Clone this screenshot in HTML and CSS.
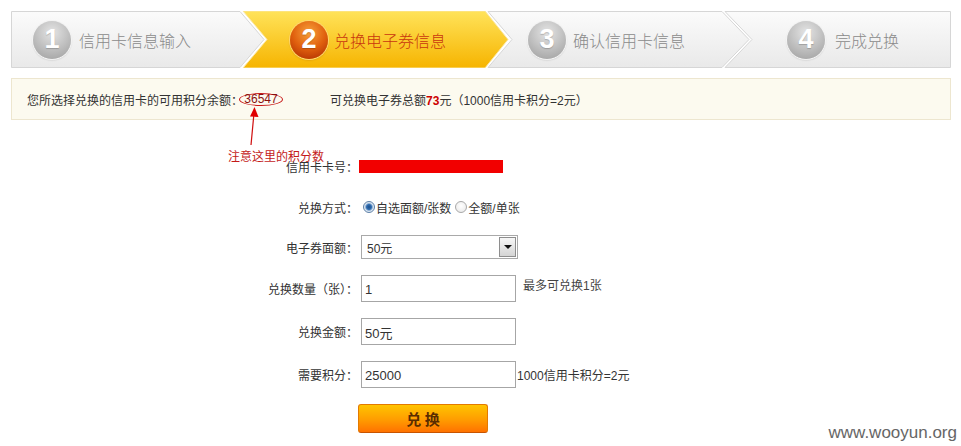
FILE: index.html
```html
<!DOCTYPE html>
<html lang="zh-CN">
<head>
<meta charset="utf-8">
<title>兑换电子券信息</title>
<link rel="stylesheet" href="styles.css">
</head>
<body>
<div class="page">
  <div class="steps">
    <svg class="steps-bg" width="940" height="57" viewBox="0 0 940 57">
      <defs>
        <linearGradient id="gGray" x1="0" y1="0" x2="0" y2="1">
          <stop offset="0" stop-color="#fbfbfb"/>
          <stop offset="1" stop-color="#e9e9e9"/>
        </linearGradient>
        <linearGradient id="gYel" x1="0" y1="0" x2="0" y2="1">
          <stop offset="0" stop-color="#ffe35a"/>
          <stop offset="1" stop-color="#f6b400"/>
        </linearGradient>
      </defs>
      <polygon points="0.5,0.5 229,0.5 253,28.5 229,56.5 0.5,56.5" fill="url(#gGray)" stroke="#d6d6d6"/>
      <polygon points="232,0 474,0 497,28.5 474,57 232,57 256,28.5" fill="url(#gYel)" stroke="#fbe6a0"/>
      <polygon points="477,0.5 711,0.5 738,28.5 711,56.5 477,56.5 501,28.5" fill="url(#gGray)" stroke="#d6d6d6"/>
      <polygon points="714,0.5 939.5,0.5 939.5,56.5 714,56.5 741,28.5" fill="url(#gGray)" stroke="#d6d6d6"/>
    </svg>
    <div class="step-row">
      <div class="step step-1"><span class="num">1</span><span class="label">信用卡信息输入</span></div>
      <div class="step step-2 active"><span class="num">2</span><span class="label">兑换电子券信息</span></div>
      <div class="step step-3"><span class="num">3</span><span class="label">确认信用卡信息</span></div>
      <div class="step step-4"><span class="num">4</span><span class="label">完成兑换</span></div>
    </div>
  </div>

  <div class="info">
    <span>您所选择兑换的信用卡的可用积分余额：</span><span class="points">36547</span><span class="total">可兑换电子券总额<b class="red">73</b>元（1000信用卡积分=2元）</span>
  </div>

  <div class="form">
    <div class="row row-card">
      <div class="lbl">信用卡卡号：</div>
      <div class="ctl"><span class="redact"></span></div>
    </div>
    <div class="row row-radio">
      <div class="lbl">兑换方式：</div>
      <div class="ctl">
        <span class="radio checked"></span><span class="opt">自选面额/张数</span>
        <span class="radio"></span><span class="opt">全额/单张</span>
      </div>
    </div>
    <div class="row row-select">
      <div class="lbl">电子券面额：</div>
      <div class="ctl">
        <div class="select"><span class="sel-val">50元</span><span class="sel-btn"><span class="tri"></span></span></div>
      </div>
    </div>
    <div class="row row-input">
      <div class="lbl">兑换数量（张）：</div>
      <div class="ctl"><input class="txt" type="text" value="1"><span class="hint">最多可兑换1张</span></div>
    </div>
    <div class="row row-input">
      <div class="lbl">兑换金额：</div>
      <div class="ctl"><input class="txt" type="text" value="50元"></div>
    </div>
    <div class="row row-input">
      <div class="lbl">需要积分：</div>
      <div class="ctl"><input class="txt" type="text" value="25000"><span class="rate">1000信用卡积分=2元</span></div>
    </div>
    <div class="row row-btn">
      <div class="lbl"></div>
      <div class="ctl"><button class="btn" type="button">兑 换</button></div>
    </div>
  </div>

  <div class="note">
    <svg class="note-arrow" width="16" height="40" viewBox="0 0 16 40">
      <line x1="6" y1="38" x2="9" y2="6" stroke="#d01010" stroke-width="1.2"/>
      <polygon points="9.5,0 13.5,10 5,9.5" fill="#e00000"/>
    </svg>
    <span class="note-text">注意这里的积分数</span>
  </div>

  <div class="watermark">www.wooyun.org</div>
</div>
</body>
</html>
```

FILE: styles.css
```css
* { box-sizing: border-box; }
html, body { margin: 0; padding: 0; background: #fff; }
body {
  font-family: "Liberation Sans", "Noto Sans CJK SC", sans-serif;
  font-size: 12px;
  color: #333;
}
.page {
  position: relative;
  width: 961px;
  height: 446px;
  overflow: hidden;
  padding-top: 11px;
}

/* steps */
.steps {
  position: relative;
  margin-left: 11px;
  width: 940px;
  height: 57px;
}
.steps-bg { position: absolute; left: 0; top: 0; }
.step-row {
  position: relative;
  display: flex;
  height: 57px;
}
.step {
  display: flex;
  align-items: center;
  gap: 8px;
  height: 57px;
  font-size: 16px;
  color: #8a8a8a;
}
.step-1 { width: 232px; padding-left: 22px; }
.step-2 { width: 245px; padding-left: 47px; gap: 6px; }
.step-3 { width: 237px; padding-left: 40px; gap: 7px; }
.step-4 { width: 226px; padding-left: 62px; gap: 10px; }
.num {
  width: 38px;
  height: 38px;
  border-radius: 50%;
  display: flex;
  align-items: center;
  justify-content: center;
  font-family: "Liberation Sans", sans-serif;
  font-weight: bold;
  font-size: 27px;
  color: #fff;
  background: radial-gradient(circle at 50% 30%, #e4e4e4 0%, #c4c4c4 45%, #9c9c9c 100%);
  box-shadow: 0 0 0 1px #f4f4f4, 0 1px 2px rgba(0,0,0,0.25);
  text-shadow: 0 1px 1px rgba(0,0,0,0.2);
}
.step-2 .num {
  background: radial-gradient(circle at 50% 30%, #f7a03a 0%, #e0600e 50%, #a82500 100%);
  box-shadow: 0 0 0 1px #ffd770, 0 1px 2px rgba(120,40,0,0.4);
}
.label {
  font-family: "Noto Sans CJK SC", sans-serif;
  font-weight: 300;
}
.step-2 .label { color: #c9360e; }

/* info bar */
.info {
  margin: 10px 0 0 11px;
  width: 940px;
  height: 42px;
  border: 1px solid #ede6cf;
  background: #fcfaef;
  display: flex;
  align-items: center;
  padding-left: 15px;
  color: #333;
}
.points {
  display: inline-block;
  margin-left: -4px;
  width: 44px;
  height: 13px;
  line-height: 11px;
  border: 1px solid #c81818;
  border-radius: 50%;
  text-align: center;
  color: #8a1010;
}
.total { margin-left: 47px; }
.red { color: #c00; font-weight: bold; }

/* form */
.form {
  display: flex;
  flex-direction: column;
  gap: 16px;
  padding-top: 33px;
}
.row {
  display: grid;
  grid-template-columns: 358px auto;
  column-gap: 3px;
  align-items: center;
}
.lbl { text-align: right; color: #333; }
.ctl { display: flex; align-items: center; }
.row-card { height: 26px; }
.row-radio { height: 24px; }
.row-select { height: 24px; }
.row-input { height: 27px; }
.row-btn { height: 29px; }

.redact {
  display: block;
  width: 144px;
  height: 13px;
  background: #f20000;
  margin-left: -2px;
}
.radio {
  width: 12px;
  height: 12px;
  border-radius: 50%;
  border: 1px solid #a8a8a8;
  background: radial-gradient(circle at 50% 40%, #fff 0%, #e6e6e6 100%);
  margin: 0 1px 0 2px;
  position: relative;
}
.radio.checked {
  border-color: #5d7fa6;
  background: radial-gradient(circle at 50% 50%, #1d4f8a 0%, #2e6bb0 35%, #d8e4f0 60%, #fff 100%);
}
.opt { margin-right: 2px; }

.select {
  width: 157px;
  height: 24px;
  border: 1px solid #a9a9a9;
  display: flex;
  align-items: center;
  justify-content: space-between;
  background: #fff;
  padding: 1px 1px 1px 5px;
}
.sel-btn {
  width: 17px;
  height: 20px;
  border: 1px solid #8e8e8e;
  background: linear-gradient(#f7f7f7, #d4d4d4);
  display: flex;
  align-items: center;
  justify-content: center;
}
.tri {
  width: 0;
  height: 0;
  border-left: 4px solid transparent;
  border-right: 4px solid transparent;
  border-top: 4px solid #111;
}

.txt {
  width: 155px;
  height: 27px;
  border: 1px solid #a6a6a6;
  padding: 2px 0 0 3px;
  margin: 0;
  font-family: "Liberation Sans", "Noto Sans CJK SC", sans-serif;
  font-size: 13px;
  color: #333;
  background: #fff;
  outline: none;
}
.hint {
  margin-left: 7px;
  align-self: flex-start;
  margin-top: 1px;
  color: #444;
}
.rate { margin-left: 1px; color: #333; }

.btn {
  margin-left: -3px;
  width: 130px;
  height: 29px;
  border: 1px solid #e37a00;
  border-bottom-color: #c85400;
  border-radius: 3px;
  background: linear-gradient(#ffc400 0%, #ff9c00 55%, #ff7200 100%);
  font-family: "Noto Sans CJK SC", sans-serif;
  font-weight: bold;
  font-size: 15px;
  color: #5a2c00;
  padding: 0;
  cursor: pointer;
}

/* annotation overlay */
.note {
  position: absolute;
  left: 228px;
  top: 107px;
  width: 100px;
  height: 60px;
}
.note-arrow {
  position: absolute;
  left: 17px;
  top: 0;
}
.note-text {
  position: absolute;
  left: 0;
  top: 42px;
  color: #c41a1a;
  font-size: 12px;
  white-space: nowrap;
  line-height: 17px;
}

.watermark {
  position: absolute;
  right: 4px;
  top: 423px;
  font-family: "Liberation Sans", sans-serif;
  font-size: 17px;
  line-height: 20px;
  color: #666;
}
```
